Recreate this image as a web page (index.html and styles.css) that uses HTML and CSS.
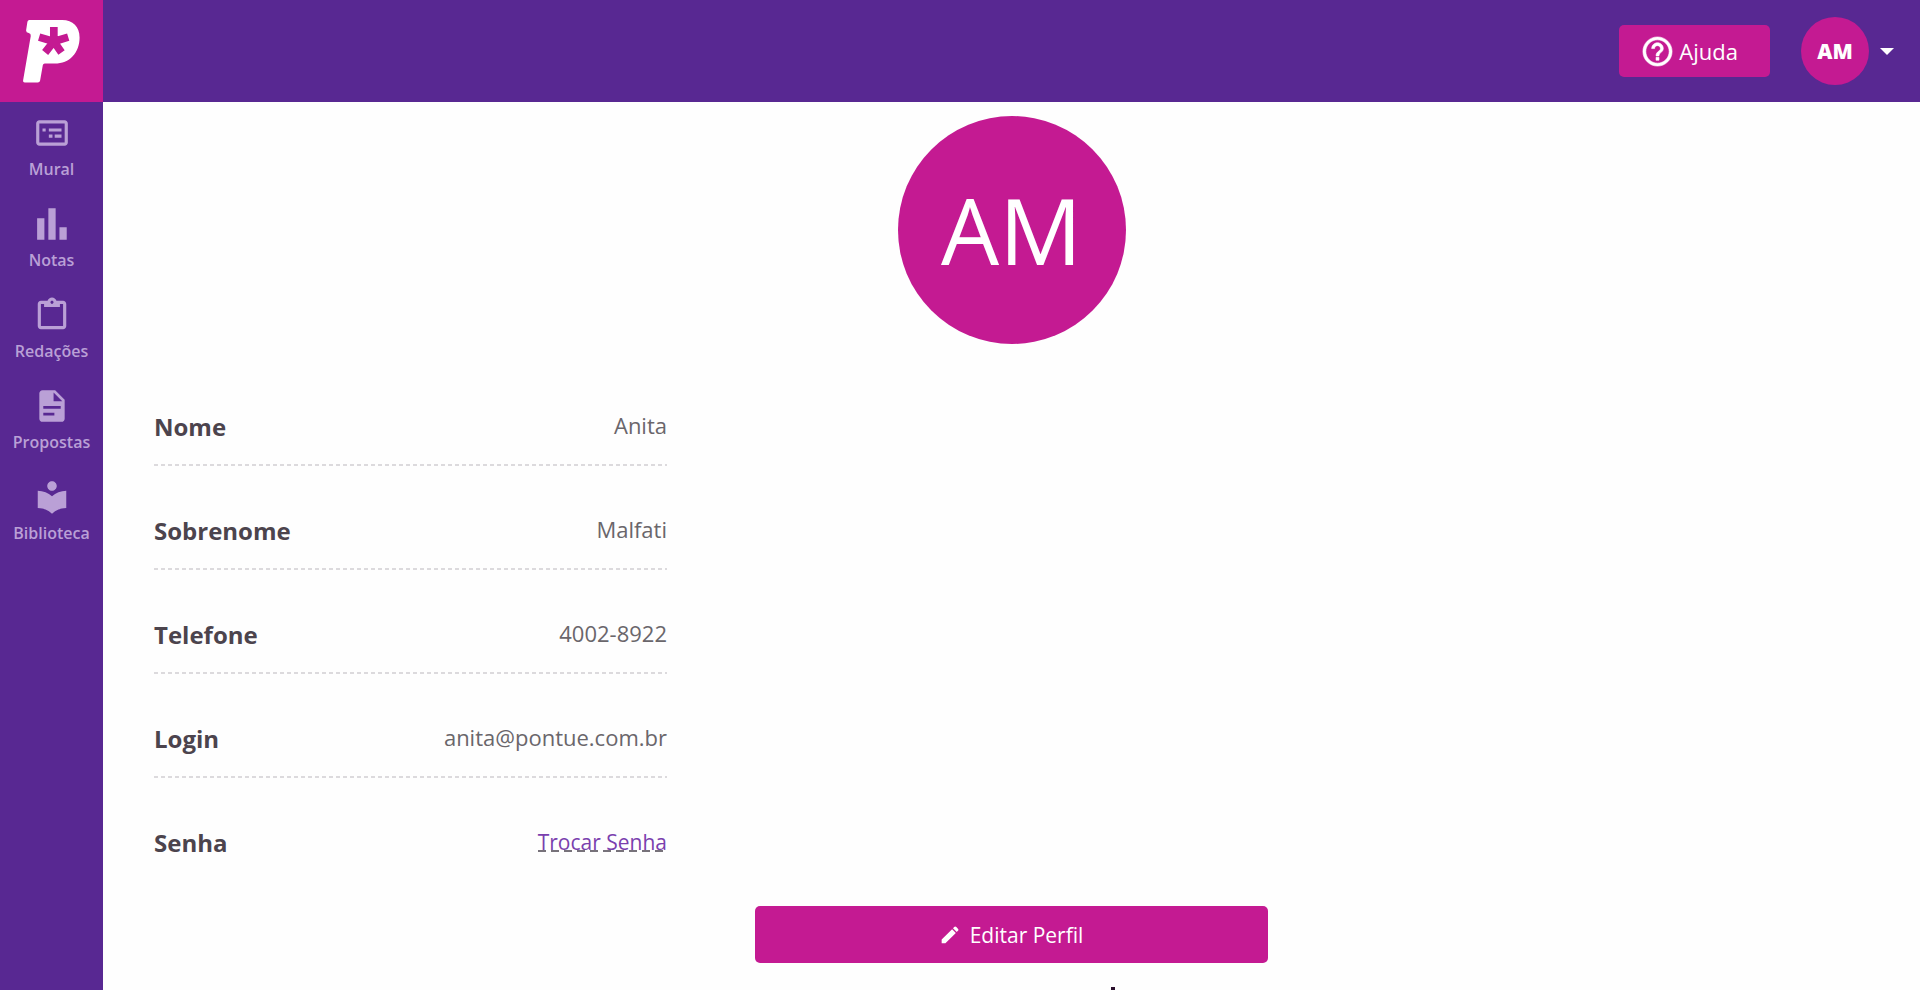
FILE: index.html
```html
<!DOCTYPE html>
<html lang="pt-BR">
<head>
  <meta charset="UTF-8">
  <meta name="viewport" content="width=device-width, initial-scale=1">
  <title>Perfil</title>
  <link rel="stylesheet" href="styles.css">
</head>
<body>
  <header class="topo">
    <a class="logo" href="#" aria-label="Início">
      <svg viewBox="0 0 308 306">
        <path fill="#fff" d="M88 60H186C218 60 238 80 238 112C238 158 208 190 164 190H134Q129 190 128 195L120 241Q119 247 113 247H74Q68 247 69 241L92 108Q93 101 86 99Q78 97 78 91L82 65Q83 60 88 60Z"/>
        <path stroke="#c41a92" stroke-width="23" fill="none" d="M161 124V81M161 124L204 111M161 124L117 111M161 124L184 157M161 124L135 157"/>
      </svg>
    </a>
    <div class="acoes">
      <button class="ajuda">
        <svg viewBox="0 0 24 24" stroke="currentColor" stroke-width=".4"><path d="M11 18h2v-2h-2v2zm1-16C6.480 2 2 6.480 2 12s4.480 10 10 10 10-4.480 10-10S17.520 2 12 2zm0 18c-4.410 0-8-3.590-8-8s3.590-8 8-8 8 3.590 8 8-3.590 8-8 8zm0-14c-2.210 0-4 1.790-4 4h2c0-1.100.9-2 2-2s2 .9 2 2c0 2-3 1.750-3 5h2c0-2.250 3-2.500 3-5 0-2.210-1.790-4-4-4z"/></svg>
        Ajuda
      </button>
      <button class="usuario">
        <span class="avatar">AM</span>
        <span class="seta"></span>
      </button>
    </div>
  </header>

  <div class="corpo">
    <nav class="menu">
      <a href="#">
        <svg viewBox="0 0 24 24"><path d="M20 4H4c-1.100 0-2 .9-2 2v12c0 1.100.9 2 2 2h16c1.100 0 2-.9 2-2V6c0-1.100-.9-2-2-2zm0 14H4V6h16v12zM6 9.200h2v1.800H6zM10 9.200h8v1.800h-8zM10 13h2.300v2H10zM13.700 13H18v2h-4.300z"/></svg>
        Mural
      </a>
      <a href="#">
        <svg viewBox="0 0 24 24"><path d="M2.600 8.300h4.600V22H2.600zM9.700 2h4.600v20H9.700zM16.700 14h4.600v8h-4.600z"/></svg>
        Notas
      </a>
      <a href="#">
        <svg viewBox="0 0 24 24"><path d="M19 3h-4.180C14.400 1.840 13.300 1 12 1s-2.400.84-2.820 2H5c-1.100 0-2 .9-2 2v14c0 1.100.9 2 2 2h14c1.100 0 2-.9 2-2V5c0-1.100-.9-2-2-2zm-7 0c.55 0 1 .45 1 1s-.45 1-1 1-1-.45-1-1 .45-1 1-1zm7 16H5V5h2v2h10V5h2v14z"/></svg>
        Redações
      </a>
      <a href="#">
        <svg viewBox="0 0 24 24"><path d="M14 2H6c-1.100 0-2 .9-2 2v16c0 1.100.9 2 2 2h12c1.100 0 2-.9 2-2V8l-6-6zm-.5 16h-7v-1.800h7V18zm4-4.200h-11V12h11v1.800zM13 9V3.500L18.500 9H13z"/></svg>
        Propostas
      </a>
      <a href="#">
        <svg viewBox="0 0 24 24"><path d="M12 11.550C9.640 9.350 6.480 8 3 8v11c3.480 0 6.640 1.350 9 3.550 2.360-2.190 5.520-3.550 9-3.550V8c-3.480 0-6.640 1.350-9 3.550zM12 8c1.660 0 3-1.340 3-3s-1.340-3-3-3-3 1.340-3 3 1.340 3 3 3z"/></svg>
        Biblioteca
      </a>
    </nav>

    <main class="perfil">
      <div class="foto">AM</div>
      <dl class="dados">
        <div class="campo">
          <dt>Nome</dt>
          <dd>Anita</dd>
        </div>
        <div class="campo">
          <dt>Sobrenome</dt>
          <dd>Malfati</dd>
        </div>
        <div class="campo">
          <dt>Telefone</dt>
          <dd>4002-8922</dd>
        </div>
        <div class="campo">
          <dt>Login</dt>
          <dd>anita@pontue.com.br</dd>
        </div>
        <div class="campo">
          <dt>Senha</dt>
          <dd><a href="#">Trocar Senha</a></dd>
        </div>
      </dl>
      <button class="editar">
        <svg viewBox="0 0 24 24"><path d="M2 17.500V22h4.500L19 9.500 14.500 5 2 17.500zM21.500 7c.8-.8.8-1.800 0-2.600l-1.900-1.900c-.8-.8-1.800-.8-2.600 0L15.600 3.900l4.500 4.500L21.500 7z"/></svg>
        Editar Perfil
      </button>
      <span class="marca"></span>
    </main>
  </div>
</body>
</html>
```
FILE: styles.css
```css
* {
  box-sizing: border-box;
}
body {
  margin: 0;
  min-height: 100vh;
  display: flex;
  flex-direction: column;
  font-family: "Segoe UI", "Open Sans", "Noto Sans", sans-serif;
  font-size: 22px;
  color: #6a666b;
  background-color: #fefefe;
}
button {
  font-family: inherit;
  font-size: 21px;
  border: none;
  color: white;
  cursor: pointer;
}
svg {
  display: block;
  fill: currentColor;
}
.topo {
  display: flex;
  justify-content: space-between;
  background-color: #582892;
}
.logo {
  width: 103px;
  height: 102px;
  background-color: #c41a92;
}
.acoes {
  display: flex;
  align-items: center;
  gap: 31px;
  padding-right: 26px;
}
.ajuda {
  display: flex;
  align-items: center;
  gap: 4px;
  height: 52px;
  padding: 0 32px 0 21px;
  border-radius: 5px;
  font-size: 22px;
  background-color: #c41a92;
}
.ajuda svg {
  width: 35px;
  height: 35px;
}
.usuario {
  display: flex;
  align-items: center;
  gap: 11px;
  padding: 0;
  background: none;
}
.avatar {
  width: 68px;
  height: 68px;
  border-radius: 50%;
  line-height: 68px;
  font-weight: 800;
  background-color: #c41a92;
}
.seta {
  border: 7px solid transparent;
  border-top-color: white;
  border-bottom: none;
}
.corpo {
  flex: 1;
  display: flex;
}
.menu {
  width: 103px;
  flex-shrink: 0;
  display: flex;
  flex-direction: column;
  gap: 25px;
  padding-top: 12px;
  background-color: #582892;
}
.menu a {
  display: flex;
  flex-direction: column;
  align-items: center;
  gap: 6px;
  font-size: 16px;
  line-height: 22px;
  font-weight: 600;
  color: #baa0d6;
  text-decoration: none;
}
.menu svg {
  width: 38px;
  height: 38px;
}
.perfil {
  position: relative;
  flex: 1;
  display: grid;
  grid-template-columns: repeat(3, 1fr);
  column-gap: 88px;
  align-content: start;
  padding: 14px 51px 0;
}
.foto {
  grid-column: 2;
  justify-self: center;
  width: 228px;
  height: 228px;
  border-radius: 50%;
  line-height: 228px;
  text-align: center;
  font-size: 92px;
  color: white;
  background-color: #c41a92;
}
.dados {
  grid-column: 1;
  margin: 46px 0 0;
}
.campo {
  display: flex;
  justify-content: space-between;
  height: 76px;
  padding-top: 18px;
  margin-bottom: 28px;
  background: repeating-linear-gradient(to right, #dcdadd 0 4px, transparent 4px 7px) bottom / 100% 2px no-repeat;
}
.campo:last-child {
  background: none;
  margin-bottom: 0;
}
dt {
  font-size: 24px;
  line-height: 38px;
  font-weight: 700;
  color: #4c444d;
}
dd {
  margin: 0;
  line-height: 34px;
}
dd a {
  font-size: 21px;
  color: #7a3fae;
  text-decoration: none;
  background: linear-gradient(to right, #77727a 8px, transparent 8px) 0 22px / 13px 2px repeat-x;
}
.editar {
  grid-row: 3;
  grid-column: 2;
  display: flex;
  align-items: center;
  justify-content: center;
  gap: 10px;
  height: 57px;
  margin-top: 24px;
  border-radius: 5px;
  background-color: #c41a92;
}
.editar svg {
  width: 20px;
  height: 20px;
}
.marca {
  position: absolute;
  right: 805px;
  bottom: 0;
  width: 4px;
  height: 3px;
  background-color: #2a0f2c;
}
```
